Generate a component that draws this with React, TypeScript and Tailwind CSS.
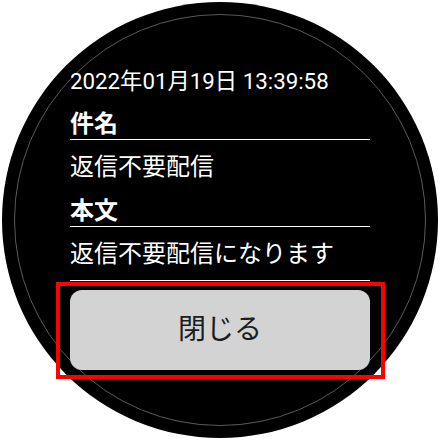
import React from "react";

export default function App() {
  const font = { fontFamily: '"Roboto", "Noto Sans CJK JP", sans-serif' };
  return (
    <div className="relative w-[440px] h-[440px] bg-white overflow-hidden" style={font}>
      <div className="absolute left-[2px] top-[2px] w-[436px] h-[436px] rounded-full bg-black">
        <div className="absolute left-[12px] top-[12px] w-[412px] h-[412px] rounded-full border border-[#5a5a5a]" />
      </div>
      <div className="relative flex flex-col pl-[70px] pt-[66px] w-[440px] text-white">
        <div className="w-[300px] h-[30px] leading-[30px] text-[22.3px] whitespace-nowrap">
          2022年01月19日 13:39:58
        </div>
        <div className="w-[300px] mt-[13px] h-[31px] leading-[30px] text-[24px] font-bold border-b border-white">
          件名
        </div>
        <div className="w-[300px] mt-[12px] h-[30px] leading-[30px] text-[24px]">
          返信不要配信
        </div>
        <div className="w-[300px] mt-[14px] h-[31px] leading-[30px] text-[24px] font-bold border-b border-white">
          本文
        </div>
        <div className="w-[300px] mt-[12px] pb-[11px] leading-[30px] text-[24px] border-b border-white">
          返信不要配信になります
        </div>
        <div className="w-[300px] mt-[9px] h-[80px] rounded-[12px] bg-[#d3d3d3] flex items-center justify-center text-[28px] text-[#1c1c1c]">
          閉じる
        </div>
      </div>
      <div className="absolute left-[56px] top-[282px] w-[329px] h-[97px] border-4 border-[#ff0000]" />
    </div>
  );
}
